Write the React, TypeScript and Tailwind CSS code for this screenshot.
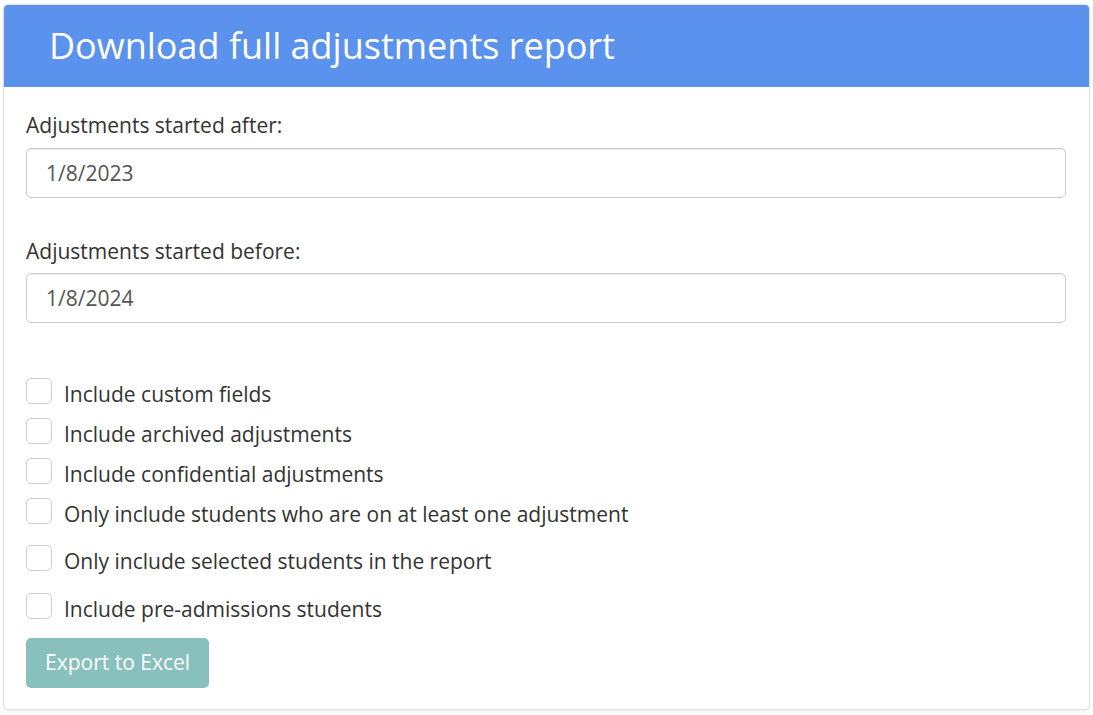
export default function App() {
  const options = [
    { label: 'Include custom fields', mb: 'mb-[10px]' },
    { label: 'Include archived adjustments', mb: 'mb-[10px]' },
    { label: 'Include confidential adjustments', mb: 'mb-[10px]' },
    { label: 'Only include students who are on at least one adjustment', mb: 'mb-[17px]' },
    { label: 'Only include selected students in the report', mb: 'mb-[18px]' },
    { label: 'Include pre-admissions students', mb: 'mb-[15px]' },
  ];

  return (
    <div className="min-h-screen bg-white pl-[3px] pt-[4px] font-['Open_Sans',sans-serif]">
      <div className="w-[1087px] overflow-hidden rounded-[5px] border border-[#e2e2e2] bg-white shadow-[0_1px_2px_rgba(0,0,0,0.08)]">
        <div className="flex h-[82px] items-center bg-[#5b92ee] pl-[45px]">
          <h1 className="text-[36px] font-normal leading-none text-white">Download full adjustments report</h1>
        </div>

        <div className="px-[22px] pb-[21px] pt-[24px]">
          <label className="block text-[21px] leading-[28px] text-[#333]">Adjustments started after:</label>
          <input
            type="text"
            defaultValue="1/8/2023"
            className="mt-[9px] block h-[50px] w-[1040px] rounded-[5px] border border-[#cccccc] px-[19px] text-[21px] text-[#555] shadow-[inset_0_1px_1px_rgba(0,0,0,0.075)] outline-none"
          />

          <label className="mt-[39px] block text-[21px] leading-[28px] text-[#333]">Adjustments started before:</label>
          <input
            type="text"
            defaultValue="1/8/2024"
            className="mt-[8px] block h-[50px] w-[1040px] rounded-[5px] border border-[#cccccc] px-[19px] text-[21px] text-[#555] shadow-[inset_0_1px_1px_rgba(0,0,0,0.075)] outline-none"
          />

          <div className="mt-[55px]">
            {options.map((o) => (
              <div key={o.label} className={`flex items-start ${o.mb}`}>
                <span className="block h-[26px] w-[26px] shrink-0 rounded-[5px] border border-[#cfcfcf] bg-white"></span>
                <span className="ml-[12px] mt-[2px] text-[21px] leading-[28px] text-[#333]">{o.label}</span>
              </div>
            ))}
          </div>

          <button className="h-[50px] rounded-[5px] bg-[#88c0bd] px-[19px] text-[21px] text-white">
            Export to Excel
          </button>
        </div>
      </div>
    </div>
  );
}
